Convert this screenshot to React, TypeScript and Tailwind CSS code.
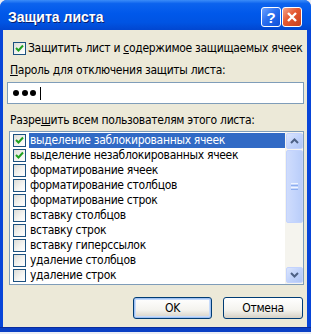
import React from "react";

const font = { fontFamily: '"DejaVu Sans Condensed", "DejaVu Sans", sans-serif' };

function XPCheck({ checked }: { checked: boolean }) {
  return (
    <div className="w-[13px] h-[13px] border border-[#1C5180] bg-[linear-gradient(135deg,#dcdcd7_0%,#f5f5f2_60%,#ffffff_100%)] flex items-center justify-center shrink-0">
      {checked && (
        <svg width="9" height="9" viewBox="0 0 9 9">
          <path d="M1 4 L3.5 6.5 L8 1.5" stroke="#21A121" strokeWidth="2" fill="none" />
        </svg>
      )}
    </div>
  );
}

const items: [string, boolean][] = [
  ["выделение заблокированных ячеек", true],
  ["выделение незаблокированных ячеек", true],
  ["форматирование ячеек", false],
  ["форматирование столбцов", false],
  ["форматирование строк", false],
  ["вставку столбцов", false],
  ["вставку строк", false],
  ["вставку гиперссылок", false],
  ["удаление столбцов", false],
  ["удаление строк", false],
];

function ScrollBtn({ down }: { down?: boolean }) {
  return (
    <div className="w-[17px] h-[16px] rounded-[2px] border border-[#c3d3fd] bg-[linear-gradient(135deg,#dbe5fd_0%,#c1d3fb_50%,#b0c6f5_100%)] flex items-center justify-center">
      <svg width="9" height="6" viewBox="0 0 9 6">
        <path d={down ? "M1 1 L4.5 4.5 L8 1" : "M1 5 L4.5 1.5 L8 5"} stroke="#4d6185" strokeWidth="2" fill="none" />
      </svg>
    </div>
  );
}

export default function App() {
  return (
    <div className="w-[311px] h-[334px] bg-[#e9ecf4] overflow-hidden" style={font}>
      <div className="w-[311px] h-[332px] flex flex-col rounded-t-[7px] overflow-hidden bg-[#0845d8]">
        {/* Title bar */}
        <div className="h-[30px] shrink-0 flex items-center bg-[linear-gradient(to_bottom,#3b8cf8_0%,#0c63ee_12%,#0058ea_45%,#0054e3_75%,#0146d0_100%)] pl-[8px] pr-[9px]">
          <div className="text-white font-bold text-[14px] leading-none [text-shadow:1px_1px_0_#0a1f6e] flex-1 mt-[4px]" style={{ fontFamily: '"Liberation Sans", sans-serif' }}>
            Защита листа
          </div>
          <div className="flex gap-[1px] mt-[4px]">
            <div className="w-[20px] h-[20px] rounded-[3px] border border-white bg-[linear-gradient(135deg,#6fa4ff_0%,#2b6ff0_45%,#0d4fd8_100%)] flex items-center justify-center">
              <span className="text-white font-bold text-[15px] leading-none" style={{ fontFamily: '"Liberation Sans", sans-serif' }}>?</span>
            </div>
            <div className="w-[20px] h-[20px] rounded-[3px] border border-white bg-[linear-gradient(135deg,#f4a58c_0%,#e4562f_45%,#c7401e_100%)] flex items-center justify-center">
              <svg width="12" height="12" viewBox="0 0 12 12">
                <path d="M2 2 L10 10 M10 2 L2 10" stroke="white" strokeWidth="2.4" />
              </svg>
            </div>
          </div>
        </div>
        {/* Body */}
        <div className="flex-1 ml-[3px] mr-[4px] bg-[#ece9d8] flex flex-col text-[12px] tracking-[-0.3px] text-black">
          <div className="h-[14px] mt-[11px] flex items-center pl-[10px] gap-[2px]">
            <XPCheck checked />
            <span className="leading-none whitespace-nowrap">Защитить лист и <u>с</u>одержимое защищаемых ячеек</span>
          </div>
          <div className="h-[14px] mt-[8px] pl-[7px] leading-[14px] whitespace-nowrap">
            <u>П</u>ароль для отключения защиты листа:
          </div>
          <div className="h-[22px] mt-[5px] ml-[4px] mr-[3px] border border-[#7f9db9] bg-white flex items-center pl-[5px] gap-[2.5px]">
            <span className="w-[6px] h-[6px] rounded-full bg-black" />
            <span className="w-[6px] h-[6px] rounded-full bg-black" />
            <span className="w-[6px] h-[6px] rounded-full bg-black" />
            <span className="w-[1px] h-[13px] bg-black ml-[1px]" />
          </div>
          <div className="h-[14px] mt-[9px] pl-[7px] leading-[14px] whitespace-nowrap">
            Разре<u>ш</u>ить всем пользователям этого листа:
          </div>
          <div className="h-[154px] mt-[4px] ml-[6px] mr-[3px] border border-[#7f9db9] bg-white flex">
            <div className="flex-1 flex flex-col pt-[1px]">
              {items.map(([label, checked], i) => (
                <div key={i} className="h-[15px] flex items-center pl-[3px]">
                  <XPCheck checked={checked} />
                  <div className={"ml-[3px] flex-1 h-[15px] leading-[15px] pl-[1px] whitespace-nowrap " + (i === 0 ? "bg-[#316ac5] text-white" : "")}>
                    {label}
                  </div>
                </div>
              ))}
            </div>
            <div className="w-[18px] flex flex-col pt-[1px] pb-[1px] pl-[1px] bg-[#f5f4ee]">
              <ScrollBtn />
              <div className="h-[73px] mt-[1px] rounded-[2px] border border-[#c3d3fd] bg-[linear-gradient(to_right,#cfdcfc_0%,#c4d5fc_50%,#b9cdf9_100%)] flex items-center justify-center">
                <div className="flex flex-col gap-[1px]">
                  <div className="w-[7px] h-[1px] bg-[#eef4fe]" />
                  <div className="w-[7px] h-[1px] bg-[#8caeef]" />
                  <div className="w-[7px] h-[1px] bg-[#eef4fe]" />
                  <div className="w-[7px] h-[1px] bg-[#8caeef]" />
                </div>
              </div>
              <div className="flex-1" />
              <ScrollBtn down />
            </div>
          </div>
          <div className="flex justify-end gap-[11px] mt-[12px] mr-[4px]">
            <div className="w-[79px] h-[22px] rounded-[3px] border border-[#003c74] bg-[linear-gradient(to_bottom,#ffffff_0%,#f4f3ee_60%,#d6d0c5_100%)] flex items-center justify-center shadow-[inset_0_0_0_1px_#9fc1f2,inset_0_0_0_2px_#c6dbfb]">
              OK
            </div>
            <div className="w-[80px] h-[22px] rounded-[3px] border border-[#003c74] bg-[linear-gradient(to_bottom,#ffffff_0%,#f4f3ee_60%,#d6d0c5_100%)] flex items-center justify-center">
              Отмена
            </div>
          </div>
        </div>
        <div className="h-[5px] shrink-0 mx-0 bg-[#0a3fc4] border-t border-[#0a2c9e]" />
      </div>
    </div>
  );
}
